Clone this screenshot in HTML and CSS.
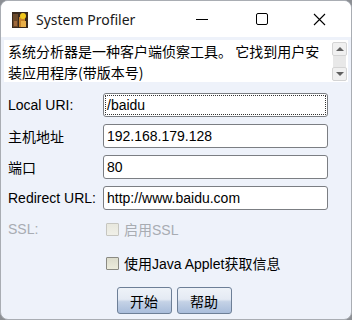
FILE: index.html
```html
<!DOCTYPE html>
<html lang="zh">
<head>
    <meta charset="UTF-8">
    <title>System Profiler</title>
    <link rel="stylesheet" href="styles.css">
</head>
<body>
    <div class="window">
        <div class="titlebar">
            <svg class="app-icon" width="16" height="16" viewBox="0 0 16 16">
                <rect width="16" height="16" fill="#3a2a1c"/>
                <rect x="1" y="2" width="5" height="13" fill="#6b4a2a"/>
                <rect x="7" y="5" width="6" height="10" fill="#c8842c"/>
                <circle cx="11" cy="4" r="3" fill="#f2c81e"/>
                <path d="M9 9 L14 9 L14 15 L9 15 Z" fill="#e9b04a"/>
                <rect x="2" y="9" width="3" height="5" fill="#a06a3c"/>
            </svg>
            <span class="title">System Profiler</span>
            <div class="controls">
                <svg class="ctl" width="58" height="36" viewBox="0 0 58 36"><path d="M19 18.5 H31" stroke="#000" stroke-width="1"/></svg>
                <svg class="ctl" width="58" height="36" viewBox="0 0 58 36"><rect x="21.5" y="12.5" width="11" height="11" rx="1.5" fill="none" stroke="#000" stroke-width="1"/></svg>
                <svg class="ctl" width="58" height="36" viewBox="0 0 58 36"><path d="M21 13 L32 24 M32 13 L21 24" stroke="#000" stroke-width="1.1"/></svg>
            </div>
        </div>

        <div class="content">
            <div class="desc">
                <p class="desc-text">系统分析器是一种客户端侦察工具。 它找到用户安装应用程序(带版本号)</p>
                <div class="scrollbar">
                    <div class="sb-btn"><span class="arrow up"></span></div>
                    <div class="sb-track"></div>
                    <div class="sb-btn"><span class="arrow down"></span></div>
                </div>
            </div>

            <div class="form">
                <label class="label">Local URI:</label>
                <div class="field focused">/baidu</div>
                <label class="label">主机地址</label>
                <div class="field">192.168.179.128</div>
                <label class="label">端口</label>
                <div class="field">80</div>
                <label class="label">Redirect URL:</label>
                <div class="field">http://www.baidu.com</div>
                <label class="label disabled">SSL:</label>
                <div class="check disabled"><span class="box"></span>启用SSL</div>
                <span></span>
                <div class="check"><span class="box"></span>使用Java Applet获取信息</div>
            </div>

            <div class="buttons">
                <button class="btn">开始</button>
                <button class="btn">帮助</button>
            </div>
        </div>
    </div>
</body>
</html>
```

FILE: styles.css
```css
* {
    margin: 0;
    padding: 0;
    box-sizing: border-box;
}

body {
    background: #8c8f94;
    width: 352px;
    height: 320px;
    overflow: hidden;
    font-family: "Liberation Sans", "Noto Sans CJK SC", sans-serif;
    font-size: 14px;
    color: #000;
}

.window {
    width: 352px;
    height: 320px;
    background: #eef2fa;
    border: 1px solid #a9adb3;
    border-radius: 8px;
    overflow: hidden;
    display: flex;
    flex-direction: column;
}

.titlebar {
    height: 36px;
    background: #fff;
    display: flex;
    align-items: center;
    flex-shrink: 0;
}

.app-icon {
    margin-left: 11px;
    margin-top: 1px;
}

.title {
    margin-left: 8px;
    font-family: "Noto Sans", sans-serif;
    font-size: 14px;
    color: #1a1a1a;
    flex: 1;
}

.controls {
    display: flex;
}

.ctl {
    display: block;
}

.content {
    padding: 3px 3px 0 3px;
    flex: 1;
    display: flex;
    flex-direction: column;
}

.desc {
    height: 42px;
    background: #fff;
    display: flex;
}

.desc-text {
    flex: 1;
    padding: 1px 12px 0 4px;
    line-height: 21px;
    font-family: "Noto Sans CJK SC", sans-serif;
    font-size: 14px;
}

.scrollbar {
    width: 15px;
    margin-right: 1px;
    display: flex;
    flex-direction: column;
    padding: 2px 0 1px;
    background: #fff;
}

.sb-btn {
    height: 14px;
    border: 1px solid #d4d4d4;
    border-radius: 2px;
    background: #f0f0f0;
    display: flex;
    align-items: center;
    justify-content: center;
}

.sb-track {
    flex: 1;
    background: #e8e8e8;
    margin: 0 1px;
}

.arrow {
    width: 0;
    height: 0;
    border-left: 4px solid transparent;
    border-right: 4px solid transparent;
}

.arrow.up {
    border-bottom: 4px solid #606060;
}

.arrow.down {
    border-top: 4px solid #606060;
}

.form {
    margin-top: 11px;
    padding-left: 4px;
    display: grid;
    grid-template-columns: 95px 225px;
    grid-template-rows: repeat(5, 24px) 30px;
    row-gap: 7px;
    align-items: center;
}

.label {
    white-space: nowrap;
}

.label.disabled {
    color: #a8acb2;
}

.field {
    height: 24px;
    background: #fff;
    border: 1px solid #7b7e83;
    border-radius: 3px;
    padding: 0 3px;
    line-height: 22px;
    white-space: nowrap;
}

.field.focused {
    outline: 1px dotted #333;
    outline-offset: -3px;
}

.check {
    display: flex;
    align-items: center;
    gap: 5px;
    margin-left: 3px;
}

.check.disabled {
    color: #a8acb2;
}

.box {
    width: 13px;
    height: 13px;
    border: 1px solid #8a8a82;
    background: linear-gradient(#dcdccc, #ececdc);
    border-radius: 1px;
}

.check.disabled .box {
    border-color: #c6c6c0;
    background: linear-gradient(#e8e8de, #f0f0e8);
}

.buttons {
    margin-top: 9px;
    display: flex;
    justify-content: center;
    gap: 5px;
    padding-right: 4px;
}

.btn {
    width: 55px;
    height: 27px;
    border: 1px solid #6d7f97;
    border-radius: 3px;
    background: linear-gradient(#eef2f8 0%, #e4eaf3 45%, #c4d2e6 55%, #a9bddb 100%);
    font-family: "Noto Sans CJK SC", sans-serif;
    font-size: 14px;
    color: #000;
}
```
